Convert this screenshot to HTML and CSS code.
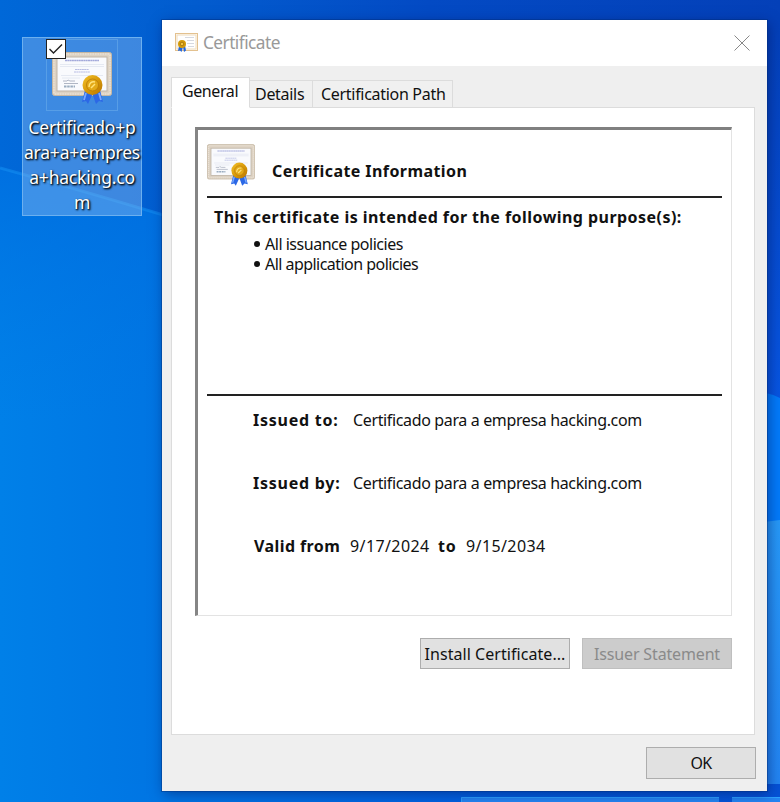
FILE: index.html
```
<!DOCTYPE html>
<html lang="en">
<head>
<meta charset="utf-8">
<title>Certificate</title>
<link rel="stylesheet" href="styles.css">
</head>
<body>
<svg class="defs" aria-hidden="true">
  <defs>
    <linearGradient id="gold" x1="0" y1="0" x2="1" y2="1"><stop offset="0" stop-color="#f3c22c"/><stop offset=".5" stop-color="#d99a08"/><stop offset="1" stop-color="#b87503"/></linearGradient>
    <symbol id="cert" viewBox="0 0 60 52">
      <rect x=".5" y=".5" width="59" height="43" rx="2" fill="#ddd2c3" stroke="#c5b7a3"/>
      <rect x="2" y="2" width="56" height="40" rx="1" fill="none" stroke="#f0e8dc" stroke-dasharray="1.5 1"/>
      <rect x="5" y="5" width="50" height="34" fill="#f9fafd" stroke="#bfb4a6"/>
      <path d="M13 8.500h34" stroke="#a3a9da" stroke-width="1.300" stroke-dasharray="2 .3"/>
      <path d="M8 12.500h44M8 14.500h44" stroke="#dfe4ef" stroke-width=".8"/>
      <path d="M23 17.500h14M22 20h16" stroke="#b9bee4" stroke-width="1" stroke-dasharray="2 .3"/>
      <path d="M9 23.500h42M10 26h18" stroke="#dfe4ef" stroke-width=".8"/>
      <path d="M11 29h4l1-1 2 1h5M12 31.500h14" fill="none" stroke="#a7aebd" stroke-width=".9"/>
      <path d="M12 34.500h11" stroke="#9aacbf" stroke-width="2" stroke-dasharray="2.500 .7"/>
      <path d="M33 38L30 50l4-1 2 3 5-11z" fill="#2c68e6"/>
      <path d="M48 38l3 12-4-1-3 3-4-11z" fill="#2c68e6"/>
      <path d="M34 41l-2 7M47 41l2 7" stroke="#79a9ff" stroke-width="1.800"/>
      <circle cx="40.500" cy="33" r="10" fill="url(#gold)"/>
      <circle cx="40.500" cy="33" r="6" fill="#e3a918" stroke="#b87a08" stroke-width=".8"/>
      <path d="M37 35c0-4 3-6 6-5M39 36l4-4" fill="none" stroke="#ffe27a" stroke-width="1.500"/>
    </symbol>
    <symbol id="cert-small" viewBox="0 0 23 20">
      <rect x=".5" y=".5" width="22" height="17" fill="#fffdf9" stroke="#e3c18f"/>
      <rect x="2" y="2" width="19" height="14" fill="#fff" stroke="#f0dcbb"/>
      <path d="M10 4.500h9M12 7.500h7M12 10.500h7M13 13.500h6" stroke="#d6d9e0"/>
      <path d="M4 13l-1 5 2-.5L6.500 19 8 14l1 5 2-1.500-1-5z" fill="#2467dc"/>
      <circle cx="7" cy="11" r="4" fill="#d49b0a"/>
      <circle cx="7" cy="11" r="1.800" fill="#f2c43c" stroke="#95640a" stroke-width=".7"/>
    </symbol>
  </defs>
</svg>
<main class="desktop">
  <svg class="wallpaper" viewBox="0 0 780 802" preserveAspectRatio="none" aria-hidden="true">
    <defs>
      <linearGradient id="top" x1="0" x2="1" y1="0" y2="0"><stop offset="0" stop-color="#0068d8"/><stop offset=".25" stop-color="#025ccf"/><stop offset=".55" stop-color="#034ac4"/><stop offset="1" stop-color="#0440b8"/></linearGradient>
      <linearGradient id="deep" x1="0" x2="0" y1="0" y2="1"><stop offset="0" stop-color="#0440b8"/><stop offset="1" stop-color="#0858e6"/></linearGradient>
      <linearGradient id="left" x1="0" x2="1" y1="0" y2="0"><stop offset="0" stop-color="#0080e8"/><stop offset="1" stop-color="#0074e2"/></linearGradient>
      <linearGradient id="fade" x1="0" x2="0" y1="0" y2="1"><stop offset="0" stop-color="#006ade"/><stop offset=".4" stop-color="#0076e4" stop-opacity="0"/></linearGradient>
      <linearGradient id="pane" x1="0" x2="0" y1="0" y2="1"><stop offset="0" stop-color="#2799f7"/><stop offset="1" stop-color="#2385f2"/></linearGradient>
      <linearGradient id="base" x1="0" x2="1" y1="0" y2="0"><stop offset="0" stop-color="#0080e8"/><stop offset=".22" stop-color="#0074e3"/><stop offset=".6" stop-color="#0060e0"/><stop offset="1" stop-color="#0552d6"/></linearGradient>
    </defs>
    <rect width="780" height="802" fill="url(#top)"/>
    <rect x="600" y="20" width="180" height="420" fill="url(#deep)"/>
    <path d="M0 168Q80 190 170 217V802H0z" fill="url(#left)"/>
    <path d="M0 168Q80 190 170 217V802H0z" fill="url(#fade)" opacity=".7"/>
    <path d="M0 168Q80 190 170 217" fill="none" stroke="#138cf0" stroke-width="3" opacity=".6"/>
    <path d="M740 390Q764 390 780 398V530H740z" fill="#037bfa"/>
    <path d="M740 525L780 520V784H740z" fill="url(#pane)"/>
    <path d="M0 784H780V802H0z" fill="url(#base)"/>
    <path d="M461 797H719V802H461zM732 797H780V802H732z" fill="#2485f3"/>
    <path d="M461.500 802V797.500H719M732 797.500H780" fill="none" stroke="#2da3ff"/>
  </svg>

  <section class="shortcut">
    <div class="thumb">
      <svg class="thumb-art"><use href="#cert"/></svg>
      <svg class="check" viewBox="0 0 20 20"><rect x=".5" y=".5" width="19" height="19" fill="#fff" stroke="#222"/><path d="M3.500 10l4 4L16 5.500" fill="none" stroke="#222" stroke-width="1.400"/></svg>
    </div>
    <p class="filename">Certificado+p<br>ara+a+empres<br>a+hacking.co<br>m</p>
  </section>

  <section class="window">
    <header class="titlebar">
      <svg class="title-icon"><use href="#cert-small"/></svg>
      <h1>Certificate</h1>
      <svg class="close" viewBox="0 0 16 16"><path d="M.5.5l15 15M15.500.5l-15 15" stroke="#888" fill="none"/></svg>
    </header>
    <nav class="tabs">
      <span class="tab active"><span class="t-general">General</span></span>
      <span class="tab details"><span class="t-details">Details</span></span>
      <span class="tab path"><span class="t-path">Certification Path</span></span>
    </nav>
    <div class="panel">
      <div class="info">
        <div class="info-head">
          <svg class="info-icon"><use href="#cert"/></svg>
          <h2>Certificate Information</h2>
        </div>
        <div class="purposes">
          <h3>This certificate is intended for the following purpose(s):</h3>
          <ul>
            <li><i></i><span class="p-one">All issuance policies</span></li>
            <li><i></i><span class="p-two">All application policies</span></li>
          </ul>
        </div>
        <dl class="fields">
          <div class="row"><dt>Issued to:</dt><dd>Certificado para a empresa hacking.com</dd></div>
          <div class="row"><dt>Issued by:</dt><dd>Certificado para a empresa hacking.com</dd></div>
          <div class="row dates"><dt class="valid">Valid from</dt><dd class="from">9/17/2024</dd><dt class="to">to</dt><dd>9/15/2034</dd></div>
        </dl>
      </div>
      <div class="actions">
        <button class="install"><span>Install Certificate...</span></button>
        <button class="issuer" disabled><span>Issuer Statement</span></button>
      </div>
    </div>
    <footer class="footer"><button class="ok"><span>OK</span></button></footer>
  </section>
</main>
</body>
</html>
```

FILE: styles.css
```
* { box-sizing: border-box; }
body { margin: 0; font: 16px/20px "Noto Sans", sans-serif; font-variant-ligatures: none; color: #111; }
h1, h2, h3, p, ul, dl, dd { margin: 0; padding: 0; }
.defs { position: absolute; width: 0; height: 0; }
.desktop { position: relative; width: 780px; height: 802px; overflow: hidden; }
.wallpaper { position: absolute; left: 0; top: 0; width: 780px; height: 802px; }

.shortcut { position: absolute; left: 22px; top: 37px; width: 120px; height: 179px; border: 1px solid #6cb0ef; background: rgba(132, 184, 240, .46); display: flex; flex-direction: column; align-items: center; }
.thumb { position: relative; width: 72px; height: 72px; margin-top: 1px; border: 1px solid rgba(110, 175, 235, .55); flex: none; }
.thumb-art { position: absolute; left: 5px; top: 12px; width: 60px; height: 52px; }
.check { position: absolute; left: -1px; top: -1px; width: 20px; height: 20px; }
.filename { margin-top: 4px; font-size: 17.500px; line-height: 25px; letter-spacing: -.2px; color: #fff; text-align: center; text-shadow: 1px 1px 2px #000, 1px 1px 2px rgba(0, 0, 0, .7); white-space: nowrap; }

.window { position: absolute; left: 162px; top: 20px; width: 605px; height: 771px; background: #efefef; box-shadow: 0 0 0 1px rgba(0, 45, 120, .4), 2px 3px 12px rgba(0, 20, 90, .5); display: flex; flex-direction: column; }
.titlebar { height: 46px; flex: none; background: #fff; display: flex; align-items: center; padding: 0 17px 0 13px; }
.title-icon { width: 23px; height: 20px; }
h1 { margin-left: 5px; font-size: 17.300px; font-weight: 400; letter-spacing: -.55px; line-height: 24px; color: #999; flex: 1; }
.close { width: 16px; height: 16px; }

.tabs { height: 42px; padding-left: 9px; display: flex; align-items: flex-end; position: relative; z-index: 1; flex: none; white-space: nowrap; }
.tab { height: 28px; width: 64px; border: 1px solid #dcdcdc; border-left: 0; background: #f0f0f0; display: flex; }
.tab span { line-height: 27px; }
.tab.active { height: 31px; width: 79px; border-left: 1px solid #dcdcdc; border-bottom-color: #fff; background: #fff; }
.t-general { padding-left: 10px; letter-spacing: -.4px; }
.t-details { padding-left: 5px; letter-spacing: -.3px; }
.t-path { padding-left: 8px; letter-spacing: -.3px; }
.tab.details { width: 63px; }
.tab.path { width: 140px; }
.panel { width: 584px; height: 628px; margin: -1px 0 0 9px; flex: none; border: 1px solid #dcdcdc; background: #fff; padding: 19px 22px 0 23px; }
.info { height: 489px; padding: 14px 9px 0; border: 1px solid #e3e3e3; border-top: 3px solid #808080; border-left: 3px solid #858585; }
.info-head { height: 54px; display: flex; border-bottom: 2px solid #222; }
.info-icon { width: 48px; height: 42px; flex: none; }
h2 { margin: 17px 0 0 17px; font-size: 16px; line-height: 20px; letter-spacing: .43px; }
.purposes { height: 198px; border-bottom: 2px solid #222; padding: 9px 0 0 7px; }
h3 { font-size: 16px; line-height: 20px; letter-spacing: .45px; white-space: nowrap; }
ul { margin: 7px 0 0 40px; list-style: none; }
li { display: flex; align-items: center; gap: 5px; letter-spacing: -.48px; }
.p-two { letter-spacing: -.54px; }
i { width: 6px; height: 6px; border-radius: 50%; background: #111; }
.fields { padding: 14px 0 0 46px; }
.row { display: flex; height: 20px; margin-bottom: 43px; white-space: nowrap; }
dt { font-weight: 700; width: 100px; flex: none; letter-spacing: .75px; }
dd { letter-spacing: -.36px; }
.dates dd { letter-spacing: .4px; }
.dates dt.valid { width: 97px; padding-left: 1px; letter-spacing: .42px; }
.dates dt.to { width: 28px; }
.from { width: 88px; }

.actions { display: flex; justify-content: flex-end; gap: 12px; margin-top: 22px; }
button { font: inherit; color: #111; height: 31px; padding: 0; border: 1px solid #adadad; background: #e1e1e1; white-space: nowrap; }
.install, .issuer { width: 150px; }
.install { letter-spacing: .05px; }
.issuer { color: #8a8a8a; background: #ccc; border-color: #bfbfbf; letter-spacing: -.15px; }
.footer { display: flex; justify-content: flex-end; padding: 12px 11px 0; }
.ok { width: 110px; height: 32px; letter-spacing: -.7px; }
```
